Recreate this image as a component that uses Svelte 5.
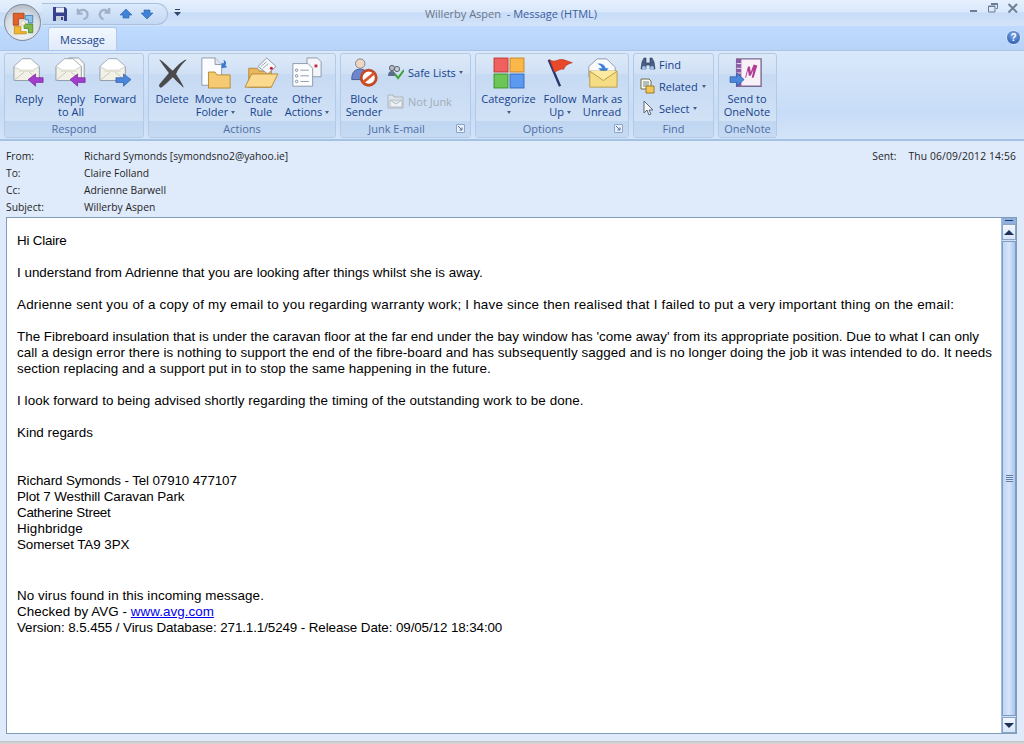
<script>
  const paragraphs = [
    [["Hi Claire", -0.2]],
    [["I understand from Adrienne that you are looking after things whilst she is away.", 0]],
    [["Adrienne sent you of a copy of my email to you regarding warranty work; I have since then realised that I failed to put a very important thing on the email:", 0.21]],
    [
      ["The Fibreboard insulation that is under the caravan floor at the far end under the bay window has 'come away' from its appropriate position. Due to what I can only", 0.012],
      ["call a design error there is nothing to support the end of the fibre-board and has subsequently sagged and is no longer doing the job it was intended to do. It needs", 0.08],
      ["section replacing and a support put in to stop the same happening in the future.", 0.05]
    ],
    [["I look forward to being advised shortly regarding the timing of the outstanding work to be done.", 0.07]],
    [["Kind regards", 0]]
  ];
  const address = [
    ["Richard Symonds - Tel 07910 477107", -0.12],
    ["Plot 7 Westhill Caravan Park", -0.1],
    ["Catherine Street", -0.25],
    ["Highbridge", 0.1],
    ["Somerset TA9 3PX", -0.06]
  ];
</script>

{#snippet envelope()}
  <path d="M2 10 L11 2 H20 L29 10 V25 H2 Z" fill="#f3f1e6" stroke="#8f9aa6"/>
  <path d="M2 10 L11 2 H20 L29 10 L22 14 H9 Z" fill="#fff" stroke="#aab3bc" stroke-width=".6"/>
  <path d="M9 14 H22 L25 16 H6 Z" fill="#e3e0cd"/>
  <path d="M2 25 L13 16 M29 25 L18 16" fill="none" stroke="#c2c6ca"/>
{/snippet}
{#snippet launcher()}
  <svg class="launcher" width="9" height="9" viewBox="0 0 9 9"><path d="M.5 .5h8v8h-8z" fill="#e6effb" stroke="#8ea6c8"/><path d="M2 2l4 4M6 3.500V6H3.500" fill="none" stroke="#5a7299"/></svg>
{/snippet}
{#snippet textLine(item)}
  <span class="line" style:letter-spacing="{item[1]}px">{item[0]}</span>
{/snippet}

<div class="window">
  <div class="orb" aria-hidden="true">
    <svg viewBox="0 0 24 24" width="26" height="26">
      <path d="M3 3h10v5H8v6H3z" fill="#e2612a" stroke="#a8431b" stroke-width=".8"/>
      <path d="M14 5h7v7h-4V9h-3z" fill="#8fc3ea" stroke="#3a7cb5" stroke-width=".8"/>
      <path d="M4 15h6v5h5v2H4z" fill="#f3b62f" stroke="#c48e16" stroke-width=".8"/>
      <path d="M13 13h8v8h-4v-4h-4z" fill="#7fb84a" stroke="#4f8a25" stroke-width=".8"/>
      <circle cx="12" cy="12" r="2.200" fill="#f7f2dd" stroke="#b7b28f" stroke-width=".5"/>
    </svg>
  </div>

  <header class="titlebar">
    <div class="qat">
      <svg width="16" height="16" viewBox="0 0 16 16"><path d="M1 1h12l2 2v12H1z" fill="#33418f"/><path d="M4 1.500h8v5H4z" fill="#e8edf7"/><path d="M4 10h8v5H4z" fill="#c6cede"/><path d="M9 11h2v3H9z" fill="#33418f"/></svg>
      <svg width="15" height="15" viewBox="0 0 16 16"><path d="M3 3v5h5M3.500 8A5 5 0 1 1 9 14" fill="none" stroke="#9fb0c8" stroke-width="2.400"/></svg>
      <svg width="15" height="15" viewBox="0 0 16 16"><path d="M13 2v5H8M12.500 7A5 5 0 1 0 7 14" fill="none" stroke="#9fb0c8" stroke-width="2.400"/></svg>
      <svg width="14" height="12" viewBox="0 0 14 12"><path d="M7 1L13 7H10V10H4V7H1Z" fill="#3f83d8" stroke="#2a5ea8" stroke-width=".6"/></svg>
      <svg width="14" height="12" viewBox="0 0 14 12"><path d="M7 11L13 5H10V2H4V5H1Z" fill="#3f83d8" stroke="#2a5ea8" stroke-width=".6"/></svg>
    </div>
    <svg class="qat-more" width="7" height="8" viewBox="0 0 7 8"><path d="M1 .5h5" stroke="#30466b"/><path d="M0 3h7L3.500 7z" fill="#30466b"/></svg>
    <div class="title"><span class="doc">Willerby Aspen</span>&nbsp; - Message (HTML)</div>
    <div class="caption">
      <svg width="10" height="10" viewBox="0 0 10 10"><path d="M1 7h7v2H1z" fill="#6a7d96"/></svg>
      <svg width="10" height="10" viewBox="0 0 10 10"><path d="M3 .5h6.500v5H8M.5 3h6.500v6H.500z M.5 3.500h6.500" fill="none" stroke="#6a7d96"/><path d="M3 .5h6.500v1.500H3z" fill="#6a7d96"/></svg>
      <svg width="12" height="10" viewBox="0 0 12 10"><path d="M1.500 1L10 9.500M10 1L1.500 9.500" fill="none" stroke="#6f8198" stroke-width="2"/></svg>
    </div>
  </header>

  <div class="tabrow">
    <div class="tab">Message</div>
    <div class="help">?</div>
  </div>

  <section class="ribbon">
    <div class="group g-respond">
      <div class="items">
        <div class="big w-reply">
          <svg width="36" height="34" viewBox="0 0 36 34">{@render envelope()}<path d="M17 24l8-6v4h8v5h-8v4z" fill="#a33ecb" stroke="#6d1f96" stroke-width=".7"/></svg>
          <span>Reply</span>
        </div>
        <div class="big w-replyall">
          <svg width="36" height="34" viewBox="0 0 36 34"><path d="M16 1h10l6 6v17H16z" fill="#fbfaf5" stroke="#8f9aa6"/>{@render envelope()}<path d="M17 24l8-6v4h8v5h-8v4z" fill="#a33ecb" stroke="#6d1f96" stroke-width=".7"/></svg>
          <span>Reply<br>to All</span>
        </div>
        <div class="big w-forward">
          <svg width="36" height="34" viewBox="0 0 36 34">{@render envelope()}<path d="M35 24l-8-6v4h-8v5h8v4z" fill="#4a86dc" stroke="#26559f" stroke-width=".7"/></svg>
          <span>Forward</span>
        </div>
      </div>
      <div class="label">Respond</div>
    </div>

    <div class="group g-actions">
      <div class="items">
        <div class="big w-delete">
          <svg width="32" height="34" viewBox="0 0 32 34"><path d="M3 3C8 6 14 13 17 15C21 10 26 5 31 3C26 8 22 13 20 18C23 23 26 27 28 32C24 28 20 25 17 21C13 25 9 29 5 32C3 33 2 31 3 29C6 25 10 21 13 17C10 13 6 8 3 3Z" fill="#4b4b4b" stroke="#2f2f2f" stroke-width=".5"/></svg>
          <span>Delete</span>
        </div>
        <div class="big w-move">
          <svg width="36" height="34" viewBox="0 0 36 34"><path d="M3 1h14l7 7v22H3z" fill="#fbfcff" stroke="#8d98a8"/><path d="M17 1v7h7" fill="#dfe5ee" stroke="#8d98a8"/><path d="M26 3q4 2 2 6l2 2-6 1 0-6 2 1q1-2 0-4z" fill="#3b78cf"/><path d="M10 16h7l2 3h14v14H10z" fill="#f6ca72" stroke="#b48a35"/></svg>
          <span>Move to<br>Folder<i class="caret"></i></span>
        </div>
        <div class="big w-rule">
          <svg width="36" height="34" viewBox="0 0 36 34"><path d="M5 12h9l2 3h13v17H5z" fill="#e9b85e" stroke="#b48a35"/><path d="M15 10l9-9 10 9-9 8z" fill="#f6f7fa" stroke="#8d98a8"/><path d="M18 10l6-5M20 12l6-5" stroke="#9ca6b4"/><circle cx="29" cy="12" r="1.600" fill="#c4223a"/><path d="M1 32L8 18h28l-7 14z" fill="#fbd98e" stroke="#b48a35"/></svg>
          <span>Create<br>Rule</span>
        </div>
        <div class="big w-other">
          <svg width="36" height="34" viewBox="0 0 36 34"><path d="M18 1h11l4 4v16H18z" fill="#f3f5f9" stroke="#8d98a8"/><rect x="26" y="8" width="3" height="3" fill="#c4223a"/><path d="M3 7h16l5 5v19H3z" fill="#fcfdff" stroke="#8d98a8"/><path d="M11 14h9M11 20h9M11 26h9" stroke="#8d98a8"/><g fill="#fff" stroke="#7d8898"><circle cx="7" cy="14" r="1.300"/><circle cx="7" cy="20" r="1.300"/><circle cx="7" cy="26" r="1.300"/></g></svg>
          <span>Other<br>Actions<i class="caret"></i></span>
        </div>
      </div>
      <div class="label">Actions</div>
    </div>

    <div class="group g-junk">
      <div class="items">
        <div class="big w-block">
          <svg width="30" height="34" viewBox="0 0 30 34"><circle cx="11" cy="7" r="5" fill="#f0d6c0" stroke="#7b7f88"/><path d="M2 24c0-9 4-11 9-11s9 3 9 11z" fill="#6c86d0" stroke="#45578f"/><circle cx="20" cy="22" r="8" fill="#fff" stroke="#c24a24" stroke-width="3"/><path d="M14 27L26 17" stroke="#d9572c" stroke-width="3"/></svg>
          <span>Block<br>Sender</span>
        </div>
        <div class="stack">
          <div class="small"><svg width="17" height="16" viewBox="0 0 17 16"><circle cx="5" cy="4" r="2.600" fill="#b8bcc4" stroke="#5c6470"/><circle cx="10" cy="5" r="2.600" fill="#c8ccd2" stroke="#5c6470"/><path d="M1 12c0-4 2-5 4-5s4 2 4 5z" fill="#5d6d8c"/><path d="M8 10l3 4 6-8" fill="none" stroke="#41a03a" stroke-width="2"/></svg><b>Safe Lists</b><i class="caret"></i></div>
          <div class="small off"><svg width="17" height="16" viewBox="0 0 17 16"><path d="M1 2h5l1 2h9v11H1z" fill="#dfe5ec" stroke="#aab2bb"/><path d="M3 7h12v7H3zM3 7l6 4 6-4" fill="#eef2f6" stroke="#b6bdc5"/></svg><b>Not Junk</b></div>
        </div>
      </div>
      <div class="label has-launcher">Junk E-mail{@render launcher()}</div>
    </div>

    <div class="group g-options">
      <div class="items">
        <div class="big w-cat">
          <svg width="32" height="32" viewBox="0 0 30 30"><rect x="1" y="1" width="13" height="13" fill="#f0605f" stroke="#c0403f"/><rect x="16" y="1" width="13" height="13" fill="#fbb84a" stroke="#cf8a2a"/><rect x="1" y="16" width="13" height="13" fill="#6cc656" stroke="#3f9a30"/><rect x="16" y="16" width="13" height="13" fill="#5b9af0" stroke="#3a70c0"/></svg>
          <span>Categorize<br><i class="caret solo"></i></span>
        </div>
        <div class="big w-follow">
          <svg width="32" height="34" viewBox="0 0 32 34"><path d="M4 3L16 31" stroke="#29356f" stroke-width="2.500"/><path d="M5 3C11 7 14 1 20 3L29 6C25 7 21 9 20 13C17 12 15 14 10 16Z" fill="#e9492b" stroke="#b53219" stroke-width=".7"/></svg>
          <span>Follow<br>Up<i class="caret"></i></span>
        </div>
        <div class="big w-mark">
          <svg width="34" height="34" viewBox="0 0 34 34"><path d="M3 10L12 2h10l9 9v10H3z" fill="#f9fafc" stroke="#8d98a8"/><path d="M12 7q7-1 9 5h3l-5 6-6-6h4q-1-3-5-5z" fill="#3e7fd8"/><path d="M4 15h29v17H4z" fill="#f6dc85" stroke="#b69a42"/><path d="M4 15l14.500 10L33 15" fill="#fbea9f" stroke="#b69a42"/></svg>
          <span>Mark as<br>Unread</span>
        </div>
      </div>
      <div class="label has-launcher">Options{@render launcher()}</div>
    </div>

    <div class="group g-find">
      <div class="items column">
        <div class="small"><svg width="16" height="14" viewBox="0 0 16 14"><path d="M2 5L4 1h2v5h4V1h2l2 4 1 7H10V8H6v4H1z" fill="#4b5f86" stroke="#26324f" stroke-width=".6"/><circle cx="4" cy="11" r="2" fill="#9fc0ea"/><circle cx="12" cy="11" r="2" fill="#9fc0ea"/></svg><b>Find</b></div>
        <div class="small"><svg width="16" height="16" viewBox="0 0 16 16"><path d="M1 1h8l2 2v8H1z" fill="#fbf9ec" stroke="#6e6a52"/><path d="M3 4h6M3 6h6M3 8h6" stroke="#70808f"/><path d="M6 8h8v7H6z" fill="#f1c75a" stroke="#9a7b22"/></svg><b>Related</b><i class="caret"></i></div>
        <div class="small"><svg width="16" height="17" viewBox="0 0 16 17"><path d="M4 1v12l3-3 2 5 2-1-2-4h4z" fill="#f6f7f9" stroke="#5d6672"/></svg><b>Select</b><i class="caret"></i></div>
      </div>
      <div class="label">Find</div>
    </div>

    <div class="group g-note">
      <div class="items">
        <div class="big w-note">
          <svg width="36" height="34" viewBox="0 0 36 34"><path d="M7 2h26v29H7z" fill="#f8f2f8" stroke="#7d6a94" stroke-width="1.500"/><path d="M7 2h5v29H7z" fill="#8d5aa8"/><path d="M7 7h5M7 12h5M7 17h5M7 22h5" stroke="#efe6f3"/><path d="M16 22l3-12h2l1 6 3-8 4 1-4 13h-2l2-9-3 7h-2l-1-6-2 8z" fill="#b03c93"/><path d="M0 21h7v-4l8 7-8 7v-4H0z" fill="#4a86dc" stroke="#26559f" stroke-width=".7"/></svg>
          <span>Send to<br>OneNote</span>
        </div>
      </div>
      <div class="label">OneNote</div>
    </div>
  </section>

  <section class="meta">
    <div class="meta-rows">
      <div class="row"><span class="k">From:</span><span>Richard Symonds [symondsno2@yahoo.ie]</span></div>
      <div class="row"><span class="k">To:</span><span>Claire Folland</span></div>
      <div class="row"><span class="k">Cc:</span><span>Adrienne Barwell</span></div>
      <div class="row"><span class="k">Subject:</span><span>Willerby Aspen</span></div>
    </div>
    <div class="sent"><span>Sent:</span><span class="date">Thu 06/09/2012 14:56</span></div>
  </section>

  <main class="mail">
    <article class="text">
      {#each paragraphs as lines}
        <p>{#each lines as item}{@render textLine(item)}{/each}</p>
      {/each}
      <p class="gap">{#each address as item}{@render textLine(item)}{/each}</p>
      <p class="gap2">
        {@render textLine(["No virus found in this incoming message.", 0.07])}
        <span class="line avg">Checked by AVG - <a href="#avg">www.avg.com</a></span>
        {@render textLine(["Version: 8.5.455 / Virus Database: 271.1.1/5249 - Release Date: 09/05/12 18:34:00", -0.1])}
      </p>
    </article>
    <aside class="scroll">
      <div class="split"></div>
      <div class="sbtn"><i class="up"></i></div>
      <div class="thumb"><i></i></div>
      <div class="sbtn"><i class="down"></i></div>
    </aside>
  </main>
  <div class="foot"></div>
</div>

<style>
  :global(body) { margin: 0; }
  .window {
    position: relative; width: 1024px; height: 744px; overflow: hidden;
    display: flex; flex-direction: column; background: #dfeafb;
    font-family: "Open Sans", "Noto Sans", sans-serif; font-size: 11px; color: #15428b;
  }
  .orb {
    position: absolute; left: 4px; top: 4px; width: 37px; height: 37px; border-radius: 50%; z-index: 3;
    display: flex; align-items: center; justify-content: center; box-sizing: border-box;
    background: radial-gradient(circle at 50% 75%, #f5f7fa 0, #d8dee6 55%, #9ea7b3 100%);
    border: 1px solid #7d8896;
  }
  .titlebar {
    height: 26px; flex: none; display: flex; align-items: center; position: relative;
    background: linear-gradient(#e6f0fd, #d9e8fb 45%, #c8dcf8 50%, #d3e3f9);
    padding-left: 42px;
  }
  .qat {
    width: 126px; height: 22px; box-sizing: border-box; display: flex; align-items: center; gap: 7px;
    padding-left: 10px; border: 1px solid #a9c0de; border-left: 0; border-radius: 0 12px 12px 0;
    background: linear-gradient(#dceafb, #c3d8f4);
    margin-top: 1px;
  }
  .qat-more { margin-left: 6px; }
  .title {
    position: absolute; left: 0; right: 2px; top: 6px; text-align: center; font-size: 11px; color: #3e5f9a;
    white-space: pre; pointer-events: none;
  }
  .doc { color: #6a7686; }
  .caption { margin-left: auto; display: flex; gap: 9px; padding-right: 5px; align-items: center; margin-top: -11px; }
  .tabrow {
    height: 24px; flex: none; display: flex; align-items: flex-end; justify-content: space-between;
    padding: 0 3px 0 48px; background: linear-gradient(#bfdbff, #b7d3f8); box-sizing: border-box;
  }
  .tab {
    width: 69px; height: 23px; box-sizing: border-box; text-align: center; line-height: 23px; font-size: 11px;
    color: #15428b; border: 1px solid #b0c8e6; border-bottom: 0; border-radius: 3px 3px 0 0;
    background: linear-gradient(#f3f8fe, #dfeafa);
  }
  .help {
    width: 15px; height: 15px; border-radius: 50%; margin-bottom: 5px; text-align: center; font: bold 10px/13px "Liberation Sans", sans-serif;
    color: #fff; background: radial-gradient(circle at 50% 30%, #7ea8e8, #1c4fa6); border: 1px solid #d7e4f7; box-sizing: border-box;
  }
  .ribbon {
    height: 91px; flex: none; box-sizing: border-box; display: flex; gap: 4px; padding: 2px 0 3px 4px;
    background: linear-gradient(#d9e8fb, #c7dcf7 70%, #d4e4f9);
    border-top: 1px solid #a9c6ea; border-bottom: 2px solid #a3c2e6;
  }
  .group {
    height: 85px; box-sizing: border-box; display: flex; flex-direction: column; overflow: hidden;
    border: 1px solid #b2cae6; border-radius: 3px; background: linear-gradient(#dce9f8, #d0e0f5 24%, #c6daf3 25%, #d5e4f7);
  }
  .g-respond { width: 140px; } .g-actions { width: 188px; } .g-junk { width: 131px; }
  .g-options { width: 154px; } .g-find { width: 81px; } .g-note { width: 59px; }
  .items { flex: 1; display: flex; min-height: 0; padding: 0 4px; }
  .g-respond .items { padding-left: 3px; }
  .label {
    height: 16px; flex: none; text-align: center; line-height: 16px; font-size: 11px; color: #4e6fa5;
    background: linear-gradient(#c0d6f1, #c6daf3); position: relative; box-sizing: border-box;
  }
  .label.has-launcher { padding-right: 18px; }
  .big {
    display: flex; flex-direction: column; align-items: center; flex: none; padding-top: 3px; box-sizing: border-box;
    text-align: center; line-height: 13px; white-space: nowrap;
  }
  .big svg { height: 32px; flex: none; margin-bottom: 3px; }
  .w-reply { width: 42px; } .w-replyall { width: 42px; } .w-forward { width: 46px; }
  .w-delete { width: 40px; margin-left: -1px; } .w-move { width: 47px; } .w-rule { width: 44px; } .w-other { width: 48px; }
  .w-block { width: 40px; margin-left: -1px; } .w-cat { width: 65px; margin-left: -4px; } .w-follow { width: 38px; } .w-mark { width: 46px; }
  .w-note { width: 48px; }
  .stack { display: flex; flex-direction: column; gap: 9px; padding-top: 8px; margin-left: 3px; }
  .column { flex-direction: column; padding: 0 0 0 6px; gap: 2px; }
  .column .small { gap: 3px; }
  .small { height: 20px; display: flex; align-items: center; gap: 4px; white-space: nowrap; }
  .small b { font-weight: 400; }
  .small.off { color: #a4acb6; }
  .caret {
    display: inline-block; width: 0; height: 0; margin-left: 3px; vertical-align: 2px;
    border: 2.500px solid transparent; border-top: 3px solid #4a5f80; border-bottom: 0;
  }
  .caret.solo { margin-left: 0; }
  .small .caret { margin-left: 1px; }
  .stack .caret { margin-left: -1px; }
  .launcher { position: absolute; right: 5px; top: 3px; }
  .meta {
    height: 76px; flex: none; box-sizing: border-box; display: flex; justify-content: space-between;
    padding: 7px 8px 0 6px; color: #1f1f1f; font-size: 10.300px; background: #dfeafb;
  }
  .row { display: flex; height: 17px; line-height: 17px; }
  .k { width: 78px; }
  .sent { display: flex; gap: 12px; line-height: 17px; }
  .date { letter-spacing: .15px; }
  .mail {
    flex: none; height: 517px; margin: 0 7px 0 6px; box-sizing: border-box; display: flex; background: #fff;
    border: 1px solid #7f9db9; overflow: hidden;
  }
  .text {
    flex: 1; padding: 15px 0 0 10px; font: 13.400px/16px "Liberation Sans", Arial, sans-serif; color: #000; white-space: nowrap;
  }
  .text p { margin: 0 0 16px; }
  .line { display: block; }
  .avg { letter-spacing: .05px; }
  p.gap { margin-top: 32px; }
  p.gap2 { margin-top: 35px; }
  a { color: #0000ee; }
  .scroll {
    width: 15px; flex: none; display: flex; flex-direction: column; background: #cfe0f6; box-sizing: border-box;
    border-left: 1px solid #9dbbe0;
  }
  .split { height: 6px; flex: none; background: #8fb0dc; position: relative; }
  .split::after { content: ""; position: absolute; left: 3px; right: 3px; top: 2px; height: 1px; background: #1f3a6b; }
  .sbtn {
    height: 16px; flex: none; display: flex; align-items: center; justify-content: center; box-sizing: border-box;
    border: 1px solid #8aa5c8; background: linear-gradient(#f2f7fe, #d7e5f8);
  }
  .up, .down { width: 0; height: 0; border: 5px solid transparent; }
  .up { border-top: 0; border-bottom: 5px solid #1d3159; }
  .down { border-bottom: 0; border-top: 5px solid #1d3159; }
  .thumb {
    flex: 1; margin: 1px 0; box-sizing: border-box; border: 1px solid #7f9cc6;
    background: linear-gradient(90deg, #bfd5f3, #d7e5f9 50%, #a9c5ee);
    display: flex; align-items: center; justify-content: center;
  }
  .thumb i { width: 7px; height: 7px; background: repeating-linear-gradient(#5d7ca8 0 1px, #d7e5f9 1px 2px); }
  .foot { flex: 1; background: linear-gradient(#dfeafb 70%, #c4c4c4 70%, #d8d8d8); }
</style>
